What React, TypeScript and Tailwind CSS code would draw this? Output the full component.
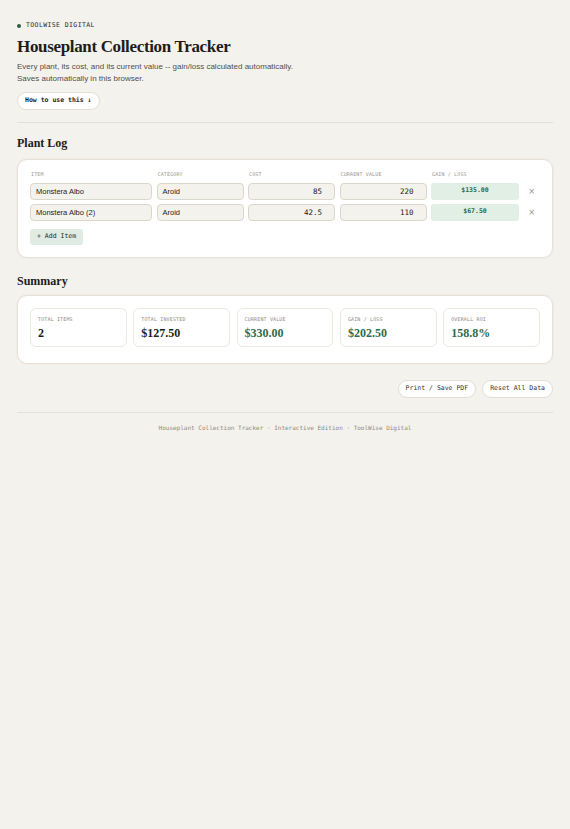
import React from "react";

const rows = [
  { item: "Monstera Albo", cat: "Aroid", cost: "85", value: "220", gain: "$135.00" },
  { item: "Monstera Albo (2)", cat: "Aroid", cost: "42.5", value: "110", gain: "$67.50" },
];

const stats = [
  { label: "TOTAL ITEMS", value: "2", green: false },
  { label: "TOTAL INVESTED", value: "$127.50", green: false },
  { label: "CURRENT VALUE", value: "$330.00", green: true },
  { label: "GAIN / LOSS", value: "$202.50", green: true },
  { label: "OVERALL ROI", value: "158.8%", green: true },
];

const headers = ["ITEM", "CATEGORY", "COST", "CURRENT VALUE", "GAIN / LOSS", ""];

export default function App() {
  return (
    <div className="min-h-screen bg-[#f4f2ed] text-[#1d1d1b] font-['Liberation_Sans',Arial,sans-serif]">
      <div className="px-[17px] pt-[21px]">
        <div className="flex items-center gap-[5px] text-[6.5px] tracking-[0.06em] text-[#2a2a28] font-['DejaVu_Sans_Mono',monospace]">
          <span className="w-[4px] h-[4px] rounded-full bg-[#2f5d43]" />
          <span>TOOLWISE DIGITAL</span>
        </div>
        <h1 className="mt-[5px] text-[17px] font-bold leading-[22px] tracking-[-0.02em] font-['Liberation_Serif',serif]">
          Houseplant Collection Tracker
        </h1>
        <p className="mt-[3px] text-[8px] leading-[12px] text-[#4f4f4a]">
          Every plant, its cost, and its current value -- gain/loss calculated automatically.
          <br />
          Saves automatically in this browser.
        </p>
        <button className="mt-[7px] h-[18px] px-[7px] rounded-full bg-white border border-[#e2ded5] text-[6.5px] font-bold text-[#1d1d1b] font-['DejaVu_Sans_Mono',monospace]">
          How to use this ↓
        </button>

        <div className="mt-[12px] h-px bg-[#e4e0d8]" />

        <h2 className="mt-[12px] text-[12px] font-bold leading-[16px] font-['Liberation_Serif',serif]">
          Plant Log
        </h2>
        <div className="mt-[8px] bg-white border border-[#e6e2d9] rounded-[10px] px-[12px] pt-[10px] pb-[12px] shadow-[0_0_0_1px_#f0ede6]">
          <div className="grid grid-cols-[122px_87px_87px_87px_88px_1fr] gap-x-[4.5px] gap-y-[4px]">
            {headers.map((h, i) => (
              <div
                key={i}
                className="text-[5px] text-[#9a968d] leading-[9px] pl-[1px] tracking-[0.03em] font-['DejaVu_Sans_Mono',monospace]"
              >
                {h}
              </div>
            ))}
            {rows.map((r, i) => (
              <React.Fragment key={i}>
                <div className="h-[17px] bg-[#f4f2ed] border border-[#dcd7cc] rounded-[4px] px-[5px] flex items-center text-[7.5px] text-[#222]">
                  {r.item}
                </div>
                <div className="h-[17px] bg-[#f4f2ed] border border-[#dcd7cc] rounded-[4px] px-[5px] flex items-center text-[7.5px] text-[#222]">
                  {r.cat}
                </div>
                <div className="h-[17px] bg-[#f4f2ed] border border-[#dcd7cc] rounded-[4px] pr-[12px] flex items-center justify-end text-[7.5px] text-[#222] font-['DejaVu_Sans_Mono',monospace]">
                  {r.cost}
                </div>
                <div className="h-[17px] bg-[#f4f2ed] border border-[#dcd7cc] rounded-[4px] pr-[12px] flex items-center justify-end text-[7.5px] text-[#222] font-['DejaVu_Sans_Mono',monospace]">
                  {r.value}
                </div>
                <div className="h-[17px] bg-[#e1efe5] rounded-[3px] flex items-center justify-center text-[6.5px] font-bold text-[#2f6b4a] font-['DejaVu_Sans_Mono',monospace]">
                  {r.gain}
                </div>
                <div className="h-[17px] flex items-center justify-center text-[10px] text-[#9a968f]">
                  ×
                </div>
              </React.Fragment>
            ))}
          </div>
          <button className="mt-[8px] h-[16px] px-[7px] rounded-[3px] bg-[#e0ebe4] text-[6.5px] text-[#1d2b22] font-['DejaVu_Sans_Mono',monospace]">
            + Add Item
          </button>
        </div>

        <h2 className="mt-[15px] text-[12px] font-bold leading-[16px] font-['Liberation_Serif',serif]">
          Summary
        </h2>
        <div className="mt-[6px] bg-white border border-[#e6e2d9] rounded-[10px] px-[12px] pt-[12px] pb-[16px] shadow-[0_0_0_1px_#f0ede6]">
          <div className="grid grid-cols-5 gap-[6.5px]">
            {stats.map((s, i) => (
              <div key={i} className="h-[39px] border border-[#ebe8e1] rounded-[6px] px-[7px] pt-[7px]">
                <div className="text-[5px] leading-[7px] text-[#8f8b83] tracking-[0.03em] font-['DejaVu_Sans_Mono',monospace]">
                  {s.label}
                </div>
                <div
                  className={
                    s.green
                      ? "mt-[3px] text-[12px] font-bold leading-[15px] text-[#2f6b4a] font-['Liberation_Serif',serif]"
                      : "mt-[3px] text-[12px] font-bold leading-[15px] text-[#1d1d1b] font-['Liberation_Serif',serif]"
                  }
                >
                  {s.value}
                </div>
              </div>
            ))}
          </div>
        </div>

        <div className="mt-[16px] flex justify-end gap-[6px]">
          <button className="h-[18px] px-[7px] rounded-full bg-white border border-[#e2ded5] text-[6.5px] text-[#333] font-['DejaVu_Sans_Mono',monospace]">
            Print / Save PDF
          </button>
          <button className="h-[18px] px-[7px] rounded-full bg-white border border-[#e2ded5] text-[6.5px] text-[#333] font-['DejaVu_Sans_Mono',monospace]">
            Reset All Data
          </button>
        </div>

        <div className="mt-[14px] h-px bg-[#e4e0d8]" />
        <div className="mt-[10px] text-center text-[6px] text-[#8f8b83] font-['DejaVu_Sans_Mono',monospace]">
          Houseplant Collection Tracker · Interactive Edition · ToolWise Digital
        </div>
      </div>
    </div>
  );
}
